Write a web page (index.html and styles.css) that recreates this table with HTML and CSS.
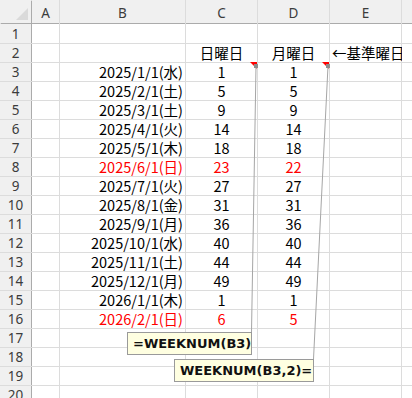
FILE: index.html
```html
<!DOCTYPE html>
<html lang="ja">
<head>
<meta charset="utf-8">
<link rel="stylesheet" href="styles.css">
</head>
<body>
<div class="page">
  <div class="sheet">
    <div class="corner"><span class="tri"></span></div>
    <div class="ch">A</div><div class="ch">B</div><div class="ch">C</div><div class="ch">D</div><div class="ch">E</div><div class="ch"></div>

    <div class="rh">1</div><div class="c"></div><div class="c"></div><div class="c"></div><div class="c"></div><div class="c"></div><div class="c"></div>
    <div class="rh">2</div><div class="c"></div><div class="c"></div><div class="c mid">日曜日</div><div class="c mid">月曜日</div><div class="c left">←基準曜日</div><div class="c"></div>
    <div class="rh">3</div><div class="c"></div><div class="c right">2025/1/1(水)</div><div class="c mid">1</div><div class="c mid">1</div><div class="c"></div><div class="c"></div>
    <div class="rh">4</div><div class="c"></div><div class="c right">2025/2/1(土)</div><div class="c mid">5</div><div class="c mid">5</div><div class="c"></div><div class="c"></div>
    <div class="rh">5</div><div class="c"></div><div class="c right">2025/3/1(土)</div><div class="c mid">9</div><div class="c mid">9</div><div class="c"></div><div class="c"></div>
    <div class="rh">6</div><div class="c"></div><div class="c right">2025/4/1(火)</div><div class="c mid">14</div><div class="c mid">14</div><div class="c"></div><div class="c"></div>
    <div class="rh">7</div><div class="c"></div><div class="c right">2025/5/1(木)</div><div class="c mid">18</div><div class="c mid">18</div><div class="c"></div><div class="c"></div>
    <div class="rh">8</div><div class="c"></div><div class="c right red">2025/6/1(日)</div><div class="c mid red">23</div><div class="c mid red">22</div><div class="c"></div><div class="c"></div>
    <div class="rh">9</div><div class="c"></div><div class="c right">2025/7/1(火)</div><div class="c mid">27</div><div class="c mid">27</div><div class="c"></div><div class="c"></div>
    <div class="rh">10</div><div class="c"></div><div class="c right">2025/8/1(金)</div><div class="c mid">31</div><div class="c mid">31</div><div class="c"></div><div class="c"></div>
    <div class="rh">11</div><div class="c"></div><div class="c right">2025/9/1(月)</div><div class="c mid">36</div><div class="c mid">36</div><div class="c"></div><div class="c"></div>
    <div class="rh">12</div><div class="c"></div><div class="c right">2025/10/1(水)</div><div class="c mid">40</div><div class="c mid">40</div><div class="c"></div><div class="c"></div>
    <div class="rh">13</div><div class="c"></div><div class="c right">2025/11/1(土)</div><div class="c mid">44</div><div class="c mid">44</div><div class="c"></div><div class="c"></div>
    <div class="rh">14</div><div class="c"></div><div class="c right">2025/12/1(月)</div><div class="c mid">49</div><div class="c mid">49</div><div class="c"></div><div class="c"></div>
    <div class="rh">15</div><div class="c"></div><div class="c right">2026/1/1(木)</div><div class="c mid">1</div><div class="c mid">1</div><div class="c"></div><div class="c"></div>
    <div class="rh">16</div><div class="c"></div><div class="c right red">2026/2/1(日)</div><div class="c mid red">6</div><div class="c mid red">5</div><div class="c"></div><div class="c"></div>
    <div class="rh">17</div><div class="c"></div><div class="c"></div><div class="c"></div><div class="c"></div><div class="c"></div><div class="c"></div>
    <div class="rh">18</div><div class="c"></div><div class="c"></div><div class="c"></div><div class="c"></div><div class="c"></div><div class="c"></div>
    <div class="rh">19</div><div class="c"></div><div class="c"></div><div class="c"></div><div class="c"></div><div class="c"></div><div class="c"></div>
    <div class="rh">20</div><div class="c"></div><div class="c"></div><div class="c"></div><div class="c"></div><div class="c"></div><div class="c"></div>
  </div>

  <svg class="overlay" width="412" height="398" viewBox="0 0 412 398">
    <polygon points="250,62 257,62 257,69" fill="#ff0000"/>
    <polygon points="322,62 329,62 329,69" fill="#ff0000"/>
    <line x1="256" y1="66" x2="251.5" y2="332" stroke="#a6a6a6" stroke-width="1"/>
    <line x1="328" y1="66" x2="313.5" y2="359" stroke="#a6a6a6" stroke-width="1"/>
    <rect x="254" y="64" width="4" height="4" fill="#8c8c8c"/>
    <rect x="326" y="64" width="4" height="4" fill="#8c8c8c"/>
  </svg>

  <div class="note note1">=WEEKNUM(B3)</div>
  <div class="note note2">WEEKNUM(B3,2)=</div>
</div>
</body>
</html>
```

FILE: styles.css
```css
html, body {
  margin: 0;
  padding: 0;
  background: #ffffff;
  overflow: hidden;
}

.page {
  position: relative;
  width: 412px;
  height: 398px;
  overflow: hidden;
}

.sheet {
  display: grid;
  grid-template-columns: 31px 27px 125px 71px 71px 71px 1fr;
  grid-template-rows: 23px 19px repeat(19, 18px);
  gap: 1px;
  background: #dcdcdc;
  width: 412px;
  height: 420px;
}

.corner,
.ch,
.rh {
  background: #f0f0f0;
  color: #3c3c3c;
  font-family: "Noto Sans", "Open Sans", sans-serif;
  font-size: 13.5px;
  display: flex;
  align-items: center;
  justify-content: center;
}

.corner {
  position: relative;
  box-shadow: 1px 1px 0 #ababab;
}

.corner .tri {
  position: absolute;
  right: 3px;
  bottom: 3px;
  width: 0;
  height: 0;
  border-left: 12px solid transparent;
  border-bottom: 12px solid #dadada;
}

.ch {
  box-shadow: 0 1px 0 #ababab;
  padding-top: 3px;
  box-sizing: border-box;
}

.rh {
  box-shadow: 1px 0 0 #ababab;
}

.c {
  background: #ffffff;
  font-family: "Noto Sans CJK JP", "Noto Sans", sans-serif;
  font-size: 14.5px;
  line-height: 18px;
  color: #000000;
  white-space: nowrap;
  display: flex;
  align-items: center;
  overflow: visible;
}

.mid {
  justify-content: center;
}

.right {
  justify-content: flex-end;
  padding-right: 2px;
}

.left {
  justify-content: flex-start;
  padding-left: 2px;
}

.red {
  color: #ff0000;
}

.overlay {
  position: absolute;
  left: 0;
  top: 0;
}

.note {
  position: absolute;
  box-sizing: border-box;
  background: #ffffe1;
  border: 1px solid #9a9a9a;
  font-family: "DejaVu Sans", sans-serif;
  font-weight: bold;
  font-size: 13px;
  color: #111111;
  display: flex;
  align-items: center;
  padding-left: 5px;
  white-space: nowrap;
}

.note1 {
  left: 127px;
  top: 332px;
  width: 125px;
  height: 23px;
}

.note2 {
  left: 174px;
  top: 359px;
  width: 140px;
  height: 23px;
}
```
